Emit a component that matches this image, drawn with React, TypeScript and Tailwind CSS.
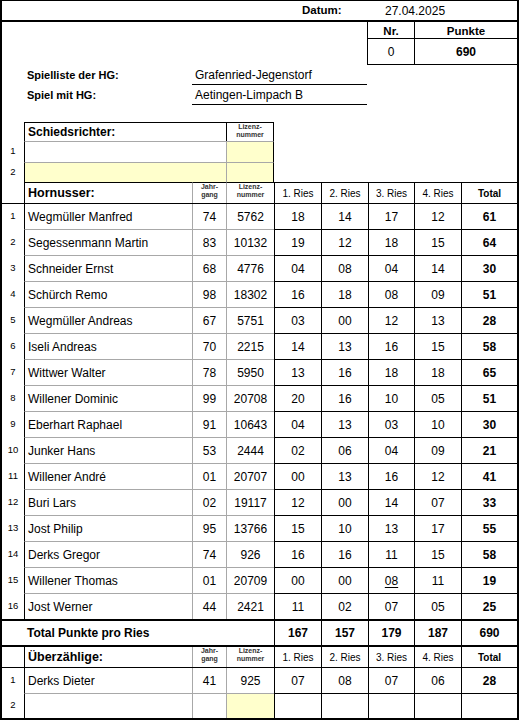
type Player = {
  name: string;
  jg: string;
  liz: string;
  ries: string[];
  total: string;
  ul?: number;
};

const GRID = "grid grid-cols-[22px_168px_34px_48px_47px_47px_46px_47px_56px]";
const GRAY = "border-[#a8a8a8]";

const players: Player[] = [
  { name: "Wegmüller Manfred", jg: "74", liz: "5762", ries: ["18", "14", "17", "12"], total: "61" },
  { name: "Segessenmann Martin", jg: "83", liz: "10132", ries: ["19", "12", "18", "15"], total: "64" },
  { name: "Schneider Ernst", jg: "68", liz: "4776", ries: ["04", "08", "04", "14"], total: "30" },
  { name: "Schürch Remo", jg: "98", liz: "18302", ries: ["16", "18", "08", "09"], total: "51" },
  { name: "Wegmüller Andreas", jg: "67", liz: "5751", ries: ["03", "00", "12", "13"], total: "28" },
  { name: "Iseli Andreas", jg: "70", liz: "2215", ries: ["14", "13", "16", "15"], total: "58" },
  { name: "Wittwer Walter", jg: "78", liz: "5950", ries: ["13", "16", "18", "18"], total: "65" },
  { name: "Willener Dominic", jg: "99", liz: "20708", ries: ["20", "16", "10", "05"], total: "51" },
  { name: "Eberhart Raphael", jg: "91", liz: "10643", ries: ["04", "13", "03", "10"], total: "30" },
  { name: "Junker Hans", jg: "53", liz: "2444", ries: ["02", "06", "04", "09"], total: "21" },
  { name: "Willener André", jg: "01", liz: "20707", ries: ["00", "13", "16", "12"], total: "41" },
  { name: "Buri Lars", jg: "02", liz: "19117", ries: ["12", "00", "14", "07"], total: "33" },
  { name: "Jost Philip", jg: "95", liz: "13766", ries: ["15", "10", "13", "17"], total: "55" },
  { name: "Derks Gregor", jg: "74", liz: "926", ries: ["16", "16", "11", "15"], total: "58" },
  { name: "Willener Thomas", jg: "01", liz: "20709", ries: ["00", "00", "08", "11"], total: "19", ul: 2 },
  { name: "Jost Werner", jg: "44", liz: "2421", ries: ["11", "02", "07", "05"], total: "25" },
];

const SmallHead = ({ a, b }: { a: string; b: string }) => (
  <div className="flex flex-col items-center justify-center text-[7px] font-bold leading-[8px] text-[#333]">
    <span>{a}</span>
    <span>{b}</span>
  </div>
);

// header row for Hornusser / Überzählige
const HeadRow = ({ title, top }: { title: string; top: boolean }) => {
  const t = top ? "border-t border-t-black" : "";
  return (
    <div className={`${GRID} ${top ? "h-[22px]" : "h-[21px]"} border-b border-black`}>
      <div />
      <div className={`flex items-center pl-[3px] border-l border-black text-[12.5px] font-bold ${t}`}>{title}</div>
      <div className={`border-l ${GRAY} ${t}`}>
        <SmallHead a="Jahr-" b="gang" />
      </div>
      <div className={`border-l ${GRAY} ${t}`}>
        <SmallHead a="Lizenz-" b="nummer" />
      </div>
      {["1. Ries", "2. Ries", "3. Ries", "4. Ries"].map((r) => (
        <div key={r} className={`flex items-center justify-center border-l border-black text-[10px] ${t}`}>
          {r}
        </div>
      ))}
      <div className={`flex items-center justify-center border-l border-black text-[10px] font-bold ${t}`}>Total</div>
    </div>
  );
};

const PlayerRow = ({
  nr,
  p,
  first,
  h = "h-[26px]",
  yellow,
}: {
  nr: number;
  p?: Player;
  first?: boolean;
  h?: string;
  yellow?: boolean;
}) => {
  const t = first ? "" : `border-t ${GRAY}`;
  const tb = first ? "" : "border-t border-black";
  return (
    <div className={`${GRID} ${h} text-[12px]`}>
      <div className="flex items-center justify-center text-[9.5px]">{nr}</div>
      <div className={`flex items-center pl-[3px] border-l border-l-black ${t}`}>{p?.name}</div>
      <div className={`flex items-center justify-center border-l ${GRAY} ${t}`}>{p?.jg}</div>
      <div className={`flex items-center justify-center border-l ${GRAY} ${t} ${yellow ? "bg-[#ffffcc]" : ""}`}>
        {p?.liz}
      </div>
      {[0, 1, 2, 3].map((i) => (
        <div key={i} className={`flex items-center justify-center border-l border-l-black ${tb}`}>
          <span className={p?.ul === i ? "underline underline-offset-2" : ""}>{p?.ries[i]}</span>
        </div>
      ))}
      <div className={`flex items-center justify-center border-l border-l-black font-bold ${tb}`}>{p?.total}</div>
    </div>
  );
};

export default function App() {
  return (
    <div className="w-[519px] h-[720px] overflow-hidden bg-white text-black border-x-2 border-t border-b-2 border-black font-['Liberation_Sans',Arial,sans-serif]">
      {/* Datum */}
      <div className="grid grid-cols-[300px_83px_1fr] h-[21px] border-b-2 border-black items-center pt-px">
        <div />
        <div className="text-[11.5px] font-bold">Datum:</div>
        <div className="text-[12px]">27.04.2025</div>
      </div>

      {/* Nr / Punkte */}
      <div className="flex justify-end">
        <div className="w-[150px] border-l border-b border-black">
          <div className="grid grid-cols-[46px_1fr] h-[17px] border-b border-black text-[11.5px] font-bold">
            <div className="flex items-center justify-center pt-px">Nr.</div>
            <div className="flex items-center justify-center border-l border-black pt-px">Punkte</div>
          </div>
          <div className="grid grid-cols-[46px_1fr] h-[25px] text-[12px]">
            <div className="flex items-center justify-center">0</div>
            <div className="flex items-center justify-center border-l border-black font-bold">690</div>
          </div>
        </div>
      </div>

      {/* Spielliste */}
      <div className="grid grid-cols-[190px_175px] h-[20px]">
        <div className="flex items-center pl-[25px] text-[11px] font-bold">Spielliste der HG:</div>
        <div className="flex items-center pl-[3px] border-b border-black text-[12px]">Grafenried-Jegenstorf</div>
      </div>
      <div className="grid grid-cols-[190px_175px] h-[20px]">
        <div className="flex items-center pl-[25px] text-[11px] font-bold">Spiel mit HG:</div>
        <div className="flex items-center pl-[3px] border-b border-black text-[12px]">Aetingen-Limpach B</div>
      </div>

      {/* Schiedsrichter */}
      <div className="mt-[17px]">
        <div className="grid grid-cols-[22px_202px_48px] h-[19px]">
          <div />
          <div className="flex items-center pl-[3px] border-l border-t border-black text-[12px] font-bold">
            Schiedsrichter:
          </div>
          <div className="border-l border-t border-r border-black">
            <SmallHead a="Lizenz-" b="nummer" />
          </div>
        </div>
        <div className="grid grid-cols-[22px_202px_48px] h-[21px]">
          <div className="flex items-center justify-center text-[9.5px]">1</div>
          <div className={`border-l border-l-black border-t ${GRAY}`} />
          <div className={`border-l border-t ${GRAY} border-r border-r-black bg-[#ffffcc]`} />
        </div>
        <div className="grid grid-cols-[22px_202px_48px] h-[20px]">
          <div className="flex items-center justify-center text-[9.5px]">2</div>
          <div className={`border-l border-l-black border-t ${GRAY} bg-[#ffffcc]`} />
          <div className={`border-l border-t ${GRAY} border-r border-r-black bg-[#ffffcc]`} />
        </div>
      </div>

      {/* Hornusser */}
      <HeadRow title="Hornusser:" top />
      {players.map((p, i) => (
        <PlayerRow key={p.name} nr={i + 1} p={p} first={i === 0} h={i === 0 ? "h-[25px]" : "h-[26px]"} />
      ))}

      {/* Total */}
      <div className={`${GRID} h-[28px] border-y-2 border-black text-[12px] font-bold`}>
        <div className="col-span-4 flex items-center pl-[25px]">Total Punkte pro Ries</div>
        {["167", "157", "179", "187", "690"].map((v) => (
          <div key={v} className="flex items-center justify-center border-l border-black">
            {v}
          </div>
        ))}
      </div>

      {/* Überzählige */}
      <HeadRow title="Überzählige:" top={false} />
      <PlayerRow
        nr={1}
        first
        h="h-[25px]"
        p={{ name: "Derks Dieter", jg: "41", liz: "925", ries: ["07", "08", "07", "06"], total: "28" }}
      />
      <PlayerRow nr={2} h="h-[25px]" yellow />
    </div>
  );
}
